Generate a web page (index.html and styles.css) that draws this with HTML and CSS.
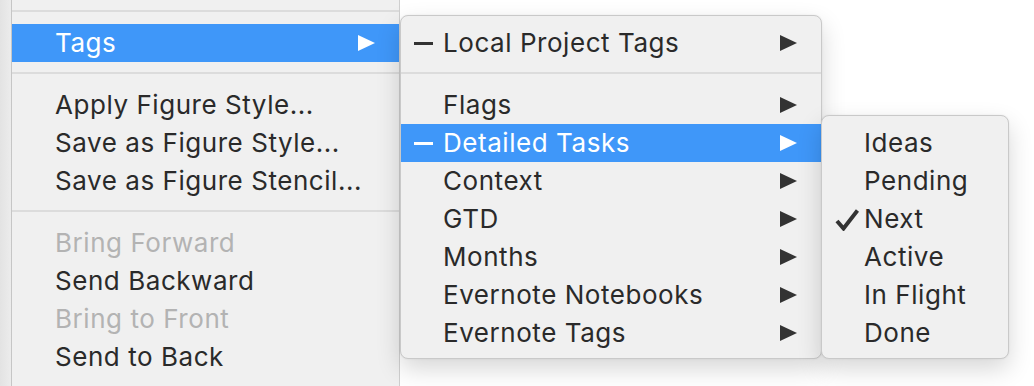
FILE: index.html
```html
<!DOCTYPE html>
<html lang="en">
<head>
  <meta charset="UTF-8">
  <title>Tags menu</title>
  <link rel="stylesheet" href="styles.css">
</head>
<body>
  <div class="desk">
    <!-- Main context menu -->
    <div class="menu main-menu">
      <div class="sep"></div>
      <div class="item selected">
        <span class="mark"></span>
        <span class="label">Tags</span>
        <svg class="arrow" width="17" height="16" viewBox="0 0 17 16"><polygon points="0,0 17,8 0,16"/></svg>
      </div>
      <div class="sep"></div>
      <div class="item"><span class="mark"></span><span class="label">Apply Figure Style...</span></div>
      <div class="item"><span class="mark"></span><span class="label">Save as Figure Style...</span></div>
      <div class="item"><span class="mark"></span><span class="label">Save as Figure Stencil...</span></div>
      <div class="sep"></div>
      <div class="item disabled"><span class="mark"></span><span class="label">Bring Forward</span></div>
      <div class="item"><span class="mark"></span><span class="label">Send Backward</span></div>
      <div class="item disabled"><span class="mark"></span><span class="label">Bring to Front</span></div>
      <div class="item"><span class="mark"></span><span class="label">Send to Back</span></div>
    </div>

    <!-- Tags submenu -->
    <div class="menu submenu tags-menu">
      <div class="item">
        <span class="mark"><span class="dash"></span></span>
        <span class="label">Local Project Tags</span>
        <svg class="arrow" width="17" height="16" viewBox="0 0 17 16"><polygon points="0,0 17,8 0,16"/></svg>
      </div>
      <div class="sep"></div>
      <div class="item">
        <span class="mark"></span>
        <span class="label">Flags</span>
        <svg class="arrow" width="17" height="16" viewBox="0 0 17 16"><polygon points="0,0 17,8 0,16"/></svg>
      </div>
      <div class="item selected">
        <span class="mark"><span class="dash"></span></span>
        <span class="label">Detailed Tasks</span>
        <svg class="arrow" width="17" height="16" viewBox="0 0 17 16"><polygon points="0,0 17,8 0,16"/></svg>
      </div>
      <div class="item">
        <span class="mark"></span>
        <span class="label">Context</span>
        <svg class="arrow" width="17" height="16" viewBox="0 0 17 16"><polygon points="0,0 17,8 0,16"/></svg>
      </div>
      <div class="item">
        <span class="mark"></span>
        <span class="label">GTD</span>
        <svg class="arrow" width="17" height="16" viewBox="0 0 17 16"><polygon points="0,0 17,8 0,16"/></svg>
      </div>
      <div class="item">
        <span class="mark"></span>
        <span class="label">Months</span>
        <svg class="arrow" width="17" height="16" viewBox="0 0 17 16"><polygon points="0,0 17,8 0,16"/></svg>
      </div>
      <div class="item">
        <span class="mark"></span>
        <span class="label">Evernote Notebooks</span>
        <svg class="arrow" width="17" height="16" viewBox="0 0 17 16"><polygon points="0,0 17,8 0,16"/></svg>
      </div>
      <div class="item">
        <span class="mark"></span>
        <span class="label">Evernote Tags</span>
        <svg class="arrow" width="17" height="16" viewBox="0 0 17 16"><polygon points="0,0 17,8 0,16"/></svg>
      </div>
    </div>

    <!-- Detailed Tasks submenu -->
    <div class="menu submenu tasks-menu">
      <div class="item"><span class="mark"></span><span class="label">Ideas</span></div>
      <div class="item"><span class="mark"></span><span class="label">Pending</span></div>
      <div class="item">
        <span class="mark">
          <svg class="check" width="24" height="22" viewBox="0 0 24 22"><path d="M2 12 L8.5 19.5 L22.5 1.5" fill="none" stroke="#333" stroke-width="4" stroke-linejoin="miter"/></svg>
        </span>
        <span class="label">Next</span>
      </div>
      <div class="item"><span class="mark"></span><span class="label">Active</span></div>
      <div class="item"><span class="mark"></span><span class="label">In Flight</span></div>
      <div class="item"><span class="mark"></span><span class="label">Done</span></div>
    </div>
  </div>
</body>
</html>
```

FILE: styles.css
```css
body {
  margin: 0;
  background: #ffffff;
  font-family: 'Inter', 'Liberation Sans', Arial, sans-serif;
  overflow: hidden;
}

.desk {
  position: relative;
  width: 1034px;
  height: 386px;
  background: linear-gradient(90deg, #e3e3e3 0, #ececec 11px, #ffffff 11px);
}

/* Menus */
.menu {
  background: #f0f0f0;
  color: #2a2a2a;
  font-size: 26px;
  letter-spacing: 0.55px;
}

.main-menu {
  display: flow-root;
  margin-left: 11px;
  width: 389px;
  height: 386px;
  border-left: 1px solid #c6c6c6;
  box-sizing: border-box;
  border-right: 1px solid #cfcfcf;
}

.submenu {
  position: absolute;
  padding: 8px 0;
  border: 1px solid #c9c9c9;
  border-radius: 8px;
  box-shadow: 0 10px 24px rgba(0, 0, 0, 0.16), 0 0 2px rgba(0, 0, 0, 0.08);
  box-sizing: border-box;
}

.tags-menu {
  left: 400px;
  top: 15px;
  width: 422px;
  height: 344px;
}

.tasks-menu {
  left: 821px;
  top: 115px;
  width: 188px;
  height: 244px;
}

.item {
  display: flex;
  align-items: center;
  height: 38px;
  padding-right: 24px;
  box-sizing: border-box;
}

.item .mark {
  width: 42px;
  flex-shrink: 0;
  display: flex;
  align-items: center;
  padding-left: 13px;
  box-sizing: border-box;
}

.main-menu .item .mark {
  width: 43px;
}

.item .label {
  flex: 1;
  white-space: nowrap;
  padding-bottom: 2px;
}

.item .arrow {
  fill: #333333;
  flex-shrink: 0;
}

.item.selected {
  background: #3f97f9;
  color: #ffffff;
}

.item.selected .arrow {
  fill: #ffffff;
}

.item.disabled {
  color: #b3b3b3;
}

.dash {
  display: block;
  width: 19px;
  height: 3px;
  background: #333333;
}

.item.selected .dash {
  background: #ffffff;
}

.check {
  margin-top: 2px;
}

.sep {
  height: 2px;
  margin: 10px 0 12px;
  background: #dcdcdc;
}
```
